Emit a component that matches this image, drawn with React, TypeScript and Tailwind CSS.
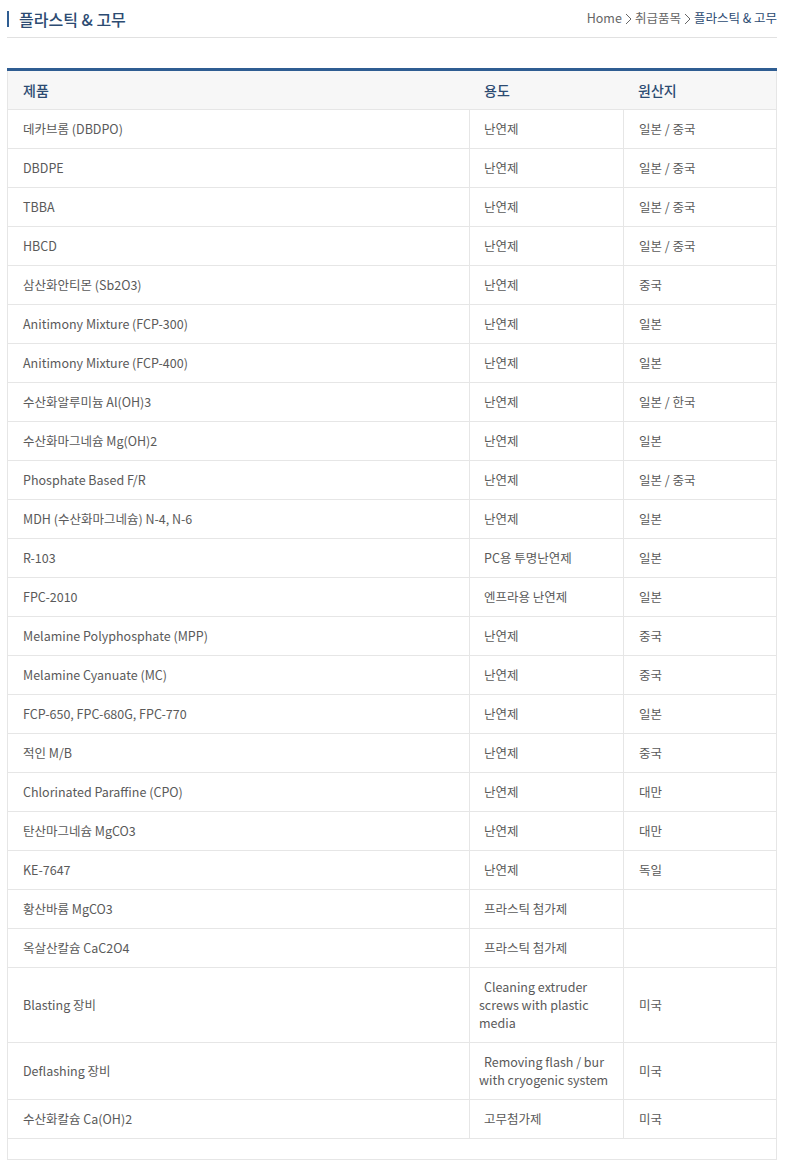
import React from "react";

type Item = { name: string; use: string; origin: string };

const items: Item[] = [
  { name: "데카브롬 (DBDPO)", use: "난연제", origin: "일본 / 중국" },
  { name: "DBDPE", use: "난연제", origin: "일본 / 중국" },
  { name: "TBBA", use: "난연제", origin: "일본 / 중국" },
  { name: "HBCD", use: "난연제", origin: "일본 / 중국" },
  { name: "삼산화안티몬 (Sb2O3)", use: "난연제", origin: "중국" },
  { name: "Anitimony Mixture (FCP-300)", use: "난연제", origin: "일본" },
  { name: "Anitimony Mixture (FCP-400)", use: "난연제", origin: "일본" },
  { name: "수산화알루미늄 Al(OH)3", use: "난연제", origin: "일본 / 한국" },
  { name: "수산화마그네슘 Mg(OH)2", use: "난연제", origin: "일본" },
  { name: "Phosphate Based F/R", use: "난연제", origin: "일본 / 중국" },
  { name: "MDH (수산화마그네슘) N-4, N-6", use: "난연제", origin: "일본" },
  { name: "R-103", use: "PC용 투명난연제", origin: "일본" },
  { name: "FPC-2010", use: "엔프라용 난연제", origin: "일본" },
  { name: "Melamine Polyphosphate (MPP)", use: "난연제", origin: "중국" },
  { name: "Melamine Cyanuate (MC)", use: "난연제", origin: "중국" },
  { name: "FCP-650, FPC-680G, FPC-770", use: "난연제", origin: "일본" },
  { name: "적인 M/B", use: "난연제", origin: "중국" },
  { name: "Chlorinated Paraffine (CPO)", use: "난연제", origin: "대만" },
  { name: "탄산마그네슘 MgCO3", use: "난연제", origin: "대만" },
  { name: "KE-7647", use: "난연제", origin: "독일" },
  { name: "황산바륨 MgCO3", use: "프라스틱 첨가제", origin: "" },
  { name: "옥살산칼슘 CaC2O4", use: "프라스틱 첨가제", origin: "" },
  { name: "Blasting 장비", use: "Cleaning extruder screws with plastic media", origin: "미국" },
  { name: "Deflashing 장비", use: "Removing flash / bur with cryogenic system", origin: "미국" },
  { name: "수산화칼슘 Ca(OH)2", use: "고무첨가제", origin: "미국" },
];

const Chevron = () => (
  <svg width="7" height="12" viewBox="0 0 7 12" className="mx-[3px] inline-block">
    <polyline points="1,1 6,6 1,11" fill="none" stroke="#666" strokeWidth="1" />
  </svg>
);

export default function App() {
  return (
    <div className="w-[786px] bg-white font-['Noto_Sans_CJK_KR','Noto_Sans',sans-serif] text-[#5a5a5a]">
      <div className="mx-[7px] w-[770px]">
        <div className="flex h-[38px] items-center justify-between border-b border-[#e1e1e1]">
          <div className="flex items-center">
            <span className="mr-[10px] h-[16px] w-[2px] bg-[#2f5d92]" />
            <h1 className="text-[16px] font-medium leading-none text-[#2c4b72]">플라스틱 &amp; 고무</h1>
          </div>
          <div className="flex items-center text-[12.5px] leading-none text-[#666]">
            <span>Home</span>
            <Chevron />
            <span>취급품목</span>
            <Chevron />
            <span className="text-[#2c4b72]">플라스틱 &amp; 고무</span>
          </div>
        </div>

        <div className="mt-[30px] border-t-[3px] border-[#2f5d92]">
          <div className="flex h-[39px] items-center border-x border-b border-[#e6e6e6] bg-[#f7f7f7] text-[14px] font-medium text-[#2c4b72]">
            <div className="w-[461px] shrink-0 pl-[15px]">제품</div>
            <div className="w-[154px] shrink-0 pl-[15px]">용도</div>
            <div className="w-[153px] shrink-0 pl-[15px]">원산지</div>
          </div>

          {items.map((item) => (
            <div key={item.name} className="flex border-x border-b border-[#e6e6e6] text-[12.5px] leading-[18px]">
              <div className="flex w-[461px] shrink-0 items-center py-[10px] pl-[15px]">{item.name}</div>
              <div className="flex w-[154px] shrink-0 items-center border-l border-[#e6e6e6] py-[10px] pl-[9px] pr-[8px]">
                <span className="indent-[5px]">{item.use}</span>
              </div>
              <div className="flex w-[153px] shrink-0 items-center border-l border-[#e6e6e6] py-[10px] pl-[15px]">{item.origin}</div>
            </div>
          ))}

          <div className="h-[21px] border-x border-b border-[#e6e6e6]" />
        </div>
      </div>
    </div>
  );
}
